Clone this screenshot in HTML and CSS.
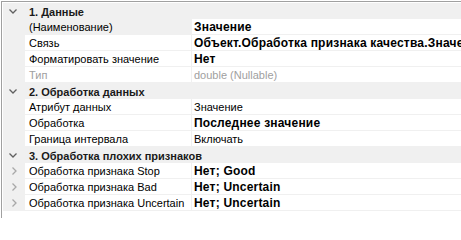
FILE: index.html
```html
<!DOCTYPE html>
<html>
<head>
<meta charset="utf-8">
<link rel="stylesheet" href="styles.css">
</head>
<body>
<div class="grid">
  <div class="cat"><span class="margin"><svg class="chev" viewBox="0 0 8 5" width="8" height="5"><path d="M0.5 0.5 L4 4 L7.5 0.5" fill="none" stroke="#606060" stroke-width="1.3"/></svg></span><span class="cat-name">1. Данные</span></div>
  <div class="row"><span class="margin"></span><span class="name sel">(Наименование)</span><span class="value bold">Значение</span></div>
  <div class="row"><span class="margin"></span><span class="name">Связь</span><span class="value bold">Объект.Обработка признака качества.Значение</span></div>
  <div class="row"><span class="margin"></span><span class="name">Форматировать значение</span><span class="value bold">Нет</span></div>
  <div class="row ro"><span class="margin"></span><span class="name">Тип</span><span class="value">double (Nullable)</span></div>
  <div class="cat"><span class="margin"><svg class="chev" viewBox="0 0 8 5" width="8" height="5"><path d="M0.5 0.5 L4 4 L7.5 0.5" fill="none" stroke="#606060" stroke-width="1.3"/></svg></span><span class="cat-name">2. Обработка данных</span></div>
  <div class="row"><span class="margin"></span><span class="name">Атрибут данных</span><span class="value">Значение</span></div>
  <div class="row"><span class="margin"></span><span class="name">Обработка</span><span class="value bold">Последнее значение</span></div>
  <div class="row"><span class="margin"></span><span class="name">Граница интервала</span><span class="value">Включать</span></div>
  <div class="cat"><span class="margin"><svg class="chev" viewBox="0 0 8 5" width="8" height="5"><path d="M0.5 0.5 L4 4 L7.5 0.5" fill="none" stroke="#606060" stroke-width="1.3"/></svg></span><span class="cat-name">3. Обработка плохих признаков</span></div>
  <div class="row"><span class="margin"><svg class="chev-r" viewBox="0 0 5 8" width="5" height="8"><path d="M0.5 0.5 L4 4 L0.5 7.5" fill="none" stroke="#a8a8a8" stroke-width="1.3"/></svg></span><span class="name">Обработка признака Stop</span><span class="value bold">Нет; Good</span></div>
  <div class="row"><span class="margin"><svg class="chev-r" viewBox="0 0 5 8" width="5" height="8"><path d="M0.5 0.5 L4 4 L0.5 7.5" fill="none" stroke="#a8a8a8" stroke-width="1.3"/></svg></span><span class="name">Обработка признака Bad</span><span class="value bold">Нет; Uncertain</span></div>
  <div class="row"><span class="margin"><svg class="chev-r" viewBox="0 0 5 8" width="5" height="8"><path d="M0.5 0.5 L4 4 L0.5 7.5" fill="none" stroke="#a8a8a8" stroke-width="1.3"/></svg></span><span class="name">Обработка признака Uncertain</span><span class="value bold">Нет; Uncertain</span></div>
</div>
</body>
</html>
```
FILE: styles.css
```css
html, body {
  margin: 0;
  padding: 0;
  background: #ffffff;
}
body {
  width: 461px;
  height: 219px;
  overflow: hidden;
  font-family: "Liberation Sans", Arial, sans-serif;
  font-size: 11px;
  color: #000;
}
.grid {
  margin: 1px 0 0 1px;
  border-top: 1px solid #a0a0a0;
  border-left: 1px solid #a0a0a0;
  padding: 1px 0 0 1px;
  height: 217px;
  box-sizing: border-box;
}
.row, .cat {
  display: flex;
  height: 16px;
  white-space: nowrap;
  overflow: hidden;
}
.cat {
  background: #f0f0f0;
}
.margin {
  width: 22px;
  flex: none;
  background: #f0f0f0;
  display: flex;
  align-items: center;
  justify-content: center;
  padding-right: 3px;
  box-sizing: border-box;
}
.chev {
  display: block;
  margin-left: 1px;
}
.chev-r {
  display: block;
  margin-left: 3px;
}
.cat-name {
  font-weight: bold;
  padding: 1px 0 0 4px;
  line-height: 16px;
  color: #1a1a1a;
}
.name {
  width: 167px;
  flex: none;
  padding: 1px 0 0 4px;
  box-sizing: border-box;
  border-right: 1px solid #f0f0f0;
  border-bottom: 1px solid #f0f0f0;
  line-height: 14px;
  overflow: hidden;
}
.name.sel {
  background: #f0f0f0;
}
.value {
  flex: 1;
  padding: 1px 0 0 2px;
  border-bottom: 1px solid #f0f0f0;
  line-height: 14px;
  overflow: hidden;
}
.bold {
  font-weight: bold;
  font-size: 12px;
  letter-spacing: 0.2px;
}
.ro .name, .ro .value {
  color: #a0a0a0;
}
```
